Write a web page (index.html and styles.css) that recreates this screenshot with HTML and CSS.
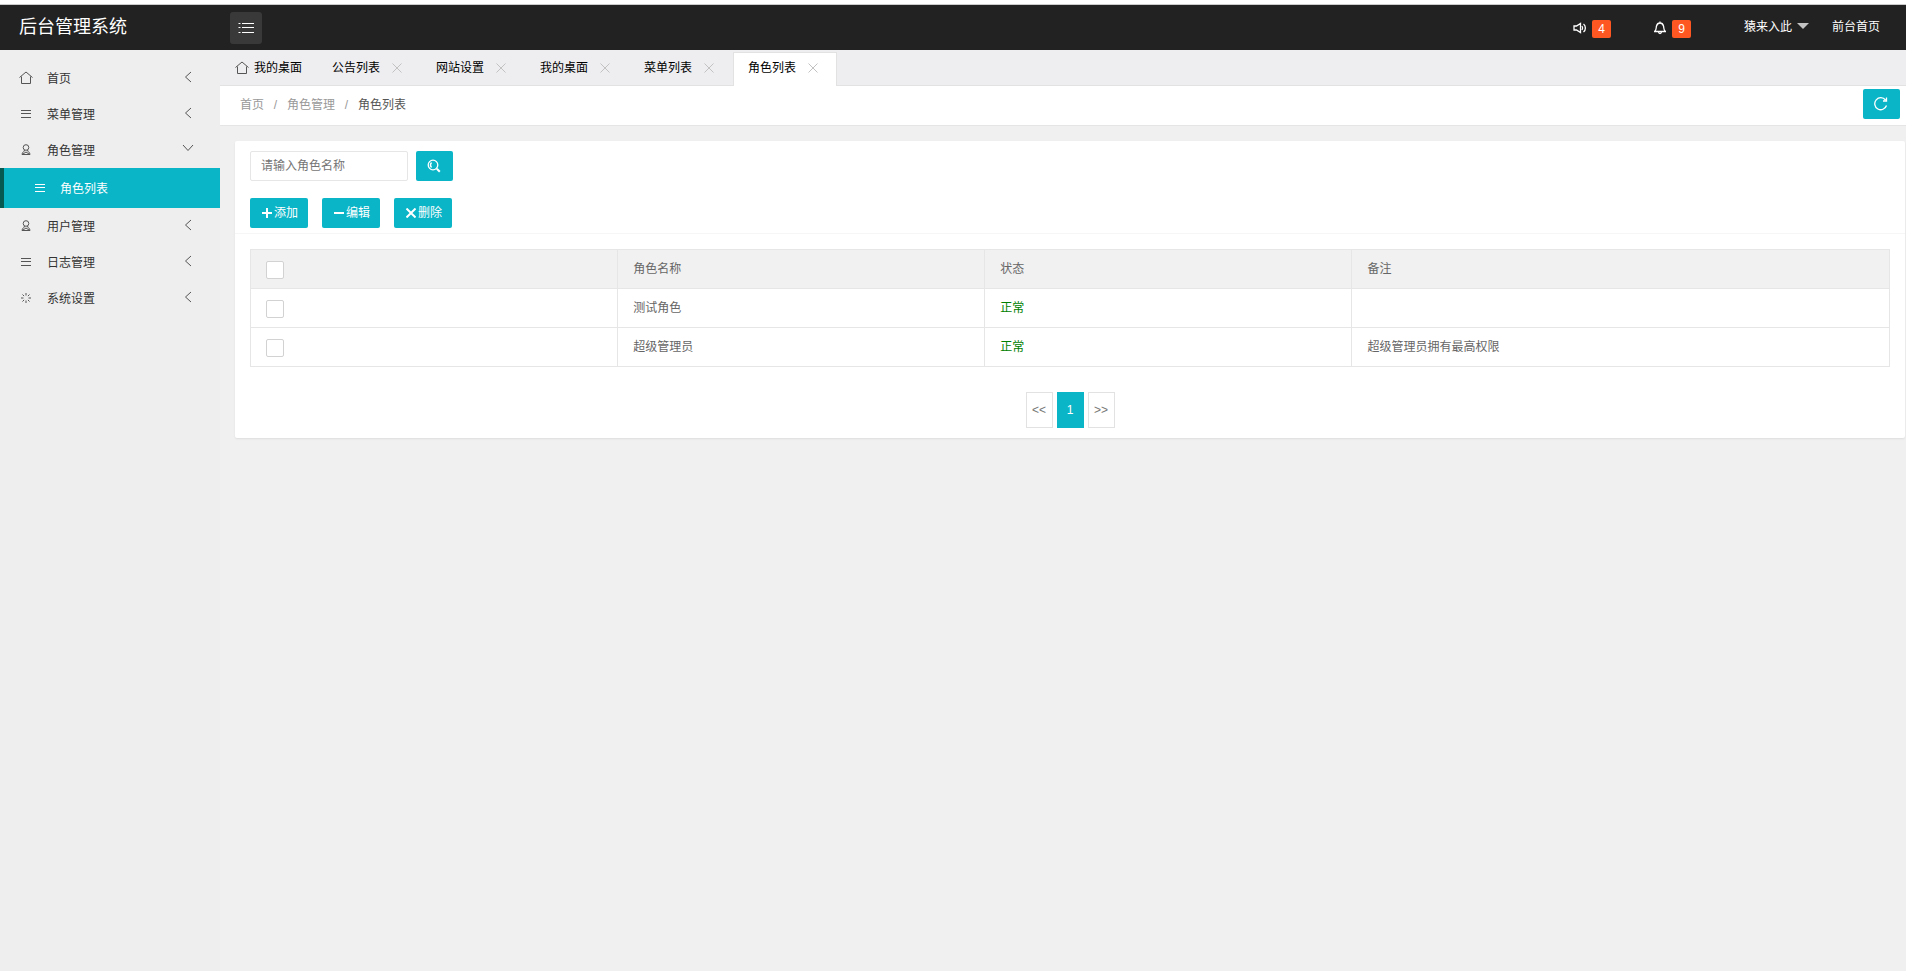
FILE: index.html
```html
<!DOCTYPE html>
<html lang="zh-CN">
<head>
<meta charset="utf-8">
<title>后台管理系统</title>
<link rel="stylesheet" href="styles.css">
</head>
<body>
<svg class="sprite" aria-hidden="true">
  <symbol id="home" viewBox="0 0 14 14"><path d="M.5 6.500 7 1l6.500 5.500M2.500 5.500v7h9v-7"/></symbol>
  <symbol id="list" viewBox="0 0 14 14"><path d="M2 3.500h10M2 6.500h10M2 10.500h10"/></symbol>
  <symbol id="user" viewBox="0 0 14 14"><circle cx="7" cy="4.500" r="2.800"/><path d="M5.500 7c0 2-2.500 2-2.500 4.500h8c0-2.500-2.500-2.500-2.500-4.500M4 11l3-2 3 2"/></symbol>
  <symbol id="gear" viewBox="0 0 14 14"><path d="M7 2v2.500M7 9.500V12M2 7h2.500M9.500 7H12M3.500 3.500l1.600 1.600M8.900 8.900l1.600 1.600M10.500 3.500 8.900 5.100M5.100 8.900l-1.600 1.600"/></symbol>
  <symbol id="left" viewBox="0 0 12 12"><path d="M9 1 3.500 6 9 11"/></symbol>
  <symbol id="down" viewBox="0 0 12 12"><path d="m1 2 5 5.500L11 2"/></symbol>
  <symbol id="close" viewBox="0 0 10 10"><path d="m.5.500 9 9m0-9-9 9"/></symbol>
</svg>
<header class="topbar">
  <div class="brand">后台管理系统</div>
  <button class="toggle" type="button" aria-label="折叠菜单"><svg class="icon16" viewBox="0 0 16 16"><path d="M.5 3.500h2M.5 7.500h2M.5 12.500h2M4 3.500h12M4 7.500h12M4 12.500h12"/></svg></button>
  <nav class="tools">
    <a class="notice" href="#" aria-label="公告"><svg class="icon bold" viewBox="0 0 14 14"><path d="M1 5h2.500L7.500 2.500v9L3.500 9H1zM9 5c.8 1.200.8 2.800 0 4M10.500 3c2.500 2 2.500 6 0 8"/></svg><span class="badge">4</span></a>
    <a class="notice" href="#" aria-label="消息"><svg class="icon bold" viewBox="0 0 14 14"><path d="M1 10.500h12M2 10c1.500-1.500 1-3 1.500-5C4 3 5 2 7 2s3 1 3.500 3c.5 2 0 3.500 1.500 5M7 .5V2M5.500 11c.3 2 2.700 2 3 0"/></svg><span class="badge">9</span></a>
    <a class="account" href="#">猿来入此<span class="caret"></span></a>
    <a class="front" href="#">前台首页</a>
  </nav>
</header>
<div class="shell">
  <nav class="sidebar">
    <a class="item" href="#"><svg class="icon"><use href="#home"/></svg><span>首页</span><svg class="arrow"><use href="#left"/></svg></a>
    <a class="item" href="#"><svg class="icon"><use href="#list"/></svg><span>菜单管理</span><svg class="arrow"><use href="#left"/></svg></a>
    <a class="item" href="#"><svg class="icon"><use href="#user"/></svg><span>角色管理</span><svg class="arrow"><use href="#down"/></svg></a>
    <a class="item sub" href="#"><svg class="icon"><use href="#list"/></svg><span>角色列表</span></a>
    <a class="item" href="#"><svg class="icon"><use href="#user"/></svg><span>用户管理</span><svg class="arrow"><use href="#left"/></svg></a>
    <a class="item" href="#"><svg class="icon"><use href="#list"/></svg><span>日志管理</span><svg class="arrow"><use href="#left"/></svg></a>
    <a class="item" href="#"><svg class="icon"><use href="#gear"/></svg><span>系统设置</span><svg class="arrow"><use href="#left"/></svg></a>
  </nav>
  <main class="main">
    <div class="tabs">
      <div class="tab home"><svg class="icon"><use href="#home"/></svg><a href="#">我的桌面</a></div>
      <div class="tab"><a href="#">公告列表</a><button class="close" type="button" aria-label="关闭"><svg><use href="#close"/></svg></button></div>
      <div class="tab"><a href="#">网站设置</a><button class="close" type="button" aria-label="关闭"><svg><use href="#close"/></svg></button></div>
      <div class="tab"><a href="#">我的桌面</a><button class="close" type="button" aria-label="关闭"><svg><use href="#close"/></svg></button></div>
      <div class="tab"><a href="#">菜单列表</a><button class="close" type="button" aria-label="关闭"><svg><use href="#close"/></svg></button></div>
      <div class="tab active"><a href="#">角色列表</a><button class="close" type="button" aria-label="关闭"><svg><use href="#close"/></svg></button></div>
    </div>
    <div class="crumbs">
      <a href="#">首页</a><span class="slash">/</span><a href="#">角色管理</a><span class="slash">/</span><span class="here">角色列表</span>
      <button class="btn square refresh" type="button" aria-label="刷新"><svg class="icon bold" viewBox="0 0 14 14"><path d="M12.500 8.500A6 6 0 1 1 11.500 3M12.500.500V4H9"/></svg></button>
    </div>
    <section class="card">
      <div class="card-head">
        <form class="search">
          <input class="field" type="text" placeholder="请输入角色名称" aria-label="角色名称">
          <button class="btn square" type="button" aria-label="搜索"><svg class="icon bold" viewBox="0 0 14 14"><circle cx="6" cy="6" r="4.800"/><path d="M4.500 3.500c-1.300 1.500-1.300 3.500 0 5"/><path class="thick" d="m9.800 9.800 3 3"/></svg></button>
        </form>
        <div class="actions">
          <button class="btn" type="button"><svg class="sign" viewBox="0 0 10 10"><path d="M0 5h10M5 0v10"/></svg>添加</button>
          <button class="btn" type="button"><svg class="sign" viewBox="0 0 10 10"><path d="M0 5h10"/></svg>编辑</button>
          <button class="btn" type="button"><svg class="sign" viewBox="0 0 10 10"><path d="m.5.500 9 9m0-9-9 9"/></svg>删除</button>
        </div>
      </div>
      <div class="card-body">
        <table class="grid">
          <colgroup><col class="c"><col class="c"><col class="c"><col></colgroup>
          <thead><tr><th><input class="check" type="checkbox" aria-label="全选"></th><th>角色名称</th><th>状态</th><th>备注</th></tr></thead>
          <tbody>
            <tr><td><input class="check" type="checkbox" aria-label="选择测试角色"></td><td>测试角色</td><td class="ok">正常</td><td></td></tr>
            <tr><td><input class="check" type="checkbox" aria-label="选择超级管理员"></td><td>超级管理员</td><td class="ok">正常</td><td>超级管理员拥有最高权限</td></tr>
          </tbody>
        </table>
        <nav class="pager"><a href="#">&lt;&lt;</a><a class="current" href="#">1</a><a href="#">&gt;&gt;</a></nav>
      </div>
    </section>
  </main>
</div>
</body>
</html>
```
FILE: styles.css
```css
* { box-sizing: border-box; }
body {
  margin: 0;
  min-height: 100vh;
  display: flex;
  flex-direction: column;
  border-top: 4px solid #fff;
  background: #f0f0f0;
  color: #333;
  font: 12px/20px "Liberation Sans", "Noto Sans CJK SC", sans-serif;
}
a { color: inherit; text-decoration: none; }
button, input { font: inherit; margin: 0; padding: 0; }
button { border: 0; background: none; color: inherit; }
svg { fill: none; stroke: currentColor; flex: none; }
.sprite { position: absolute; width: 0; height: 0; }
.icon { width: 14px; height: 14px; }
.icon16 { width: 16px; height: 16px; }
.bold { stroke-width: 1.3; }

.topbar {
  display: flex;
  align-items: center;
  height: 46px;
  border-top: 1px solid #ccc;
  background: #222;
  color: #fff;
}
.brand { width: 230px; padding: 0 0 2px 19px; font-size: 18px; line-height: 24px; }
.toggle {
  display: flex;
  align-items: center;
  justify-content: center;
  width: 32px;
  height: 32px;
  border-radius: 3px;
  background: #393939;
}
.tools { display: flex; align-items: center; margin-left: auto; padding-right: 26px; }
.notice { display: flex; align-items: center; gap: 5px; margin-right: 42px; }
.badge {
  width: 19px;
  height: 18px;
  margin-top: 2px;
  border-radius: 2px;
  background: #ff5722;
  line-height: 18px;
  text-align: center;
}
.account, .front { padding-bottom: 2px; }
.account { display: flex; align-items: center; gap: 5px; margin: 0 23px 0 11px; }
.caret { border: 6px solid transparent; border-top-color: #c2c2c2; border-bottom: 0; margin-bottom: 2px; }

.shell { display: flex; flex: 1; }
.sidebar { width: 220px; flex: none; padding-top: 10px; background: #eee; }
.item { display: flex; align-items: center; height: 36px; padding: 0 26px 0 19px; }
.item span { margin-left: 14px; padding-top: 2px; }
.item .icon { color: #555; }
.arrow { width: 12px; height: 12px; margin: 0 0 2px auto; color: #555; }
.item.sub { height: 40px; padding-left: 29px; border-left: 4px solid #065951; background: #0ab5c7; color: #fff; }
.item.sub span { margin-left: 13px; }
.item.sub .icon { color: #fff; }

.main { flex: 1; min-width: 0; }
.tabs { display: flex; height: 36px; padding-top: 2px; border-bottom: 1px solid #e2e2e2; background: #eeeef0; color: #000; }
.tab { display: flex; align-items: center; width: 104px; height: 34px; padding: 0 14px 3px; border: 1px solid transparent; border-bottom: 0; }
.tab.home { width: 97px; gap: 5px; }
.tab.home .icon { color: #555; }
.tab.active { border-color: #e2e2e2; background: #fff; }
.close { display: flex; margin-left: 12px; color: #c2c2c2; }
.close svg { width: 10px; height: 10px; }

.crumbs { display: flex; align-items: center; height: 40px; padding: 0 6px 3px 20px; border-bottom: 1px solid #e5e5e5; background: #fff; color: #999; }
.crumbs a, .crumbs span { padding-top: 2px; }
.slash { width: 23px; text-align: center; }
.here { color: #555; }
.btn {
  display: flex;
  align-items: center;
  justify-content: center;
  gap: 2px;
  width: 58px;
  height: 30px;
  padding-left: 2px;
  border-radius: 2px;
  background: #0ab5c7;
  color: #fff;
}
.square { width: 37px; padding: 0 2px 0 0; }
.refresh { margin-left: auto; }
.sign { width: 10px; height: 10px; stroke-width: 2; }
.thick { stroke-width: 2; }

.card { margin: 15px 1px 0 15px; border-radius: 2px; background: #fff; box-shadow: 0 1px 2px rgba(0, 0, 0, 0.08); }
.card-head { padding: 10px 15px 5px; border-bottom: 1px solid #f6f6f6; }
.search { display: flex; gap: 8px; margin-bottom: 17px; }
.field { width: 158px; height: 30px; padding: 0 10px; border: 1px solid #e6e6e6; border-radius: 2px; background: #fff; }
.field::placeholder { color: #757575; }
.actions { display: flex; gap: 14px; }
.card-body { padding: 15px 15px 10px; }
.grid { width: 100%; table-layout: fixed; border-collapse: collapse; color: #666; }
.grid .c { width: 22.4%; }
.grid th, .grid td { height: 39px; padding: 0 15px; border: 1px solid #e6e6e6; font-weight: 400; text-align: left; }
.grid th { background: #f1f1f1; }
.grid .ok { color: #008000; }
.check { display: block; appearance: none; width: 18px; height: 18px; margin-top: 2px; border: 1px solid #d2d2d2; border-radius: 2px; background: #fff; }
.pager { display: flex; justify-content: center; gap: 4px; margin-top: 25px; color: #777; }
.pager a { width: 27px; height: 36px; border: 1px solid #e2e2e2; font-size: 12px; line-height: 34px; text-align: center; }
.pager .current { border-color: #0ab5c7; background: #0ab5c7; color: #fff; }
```
